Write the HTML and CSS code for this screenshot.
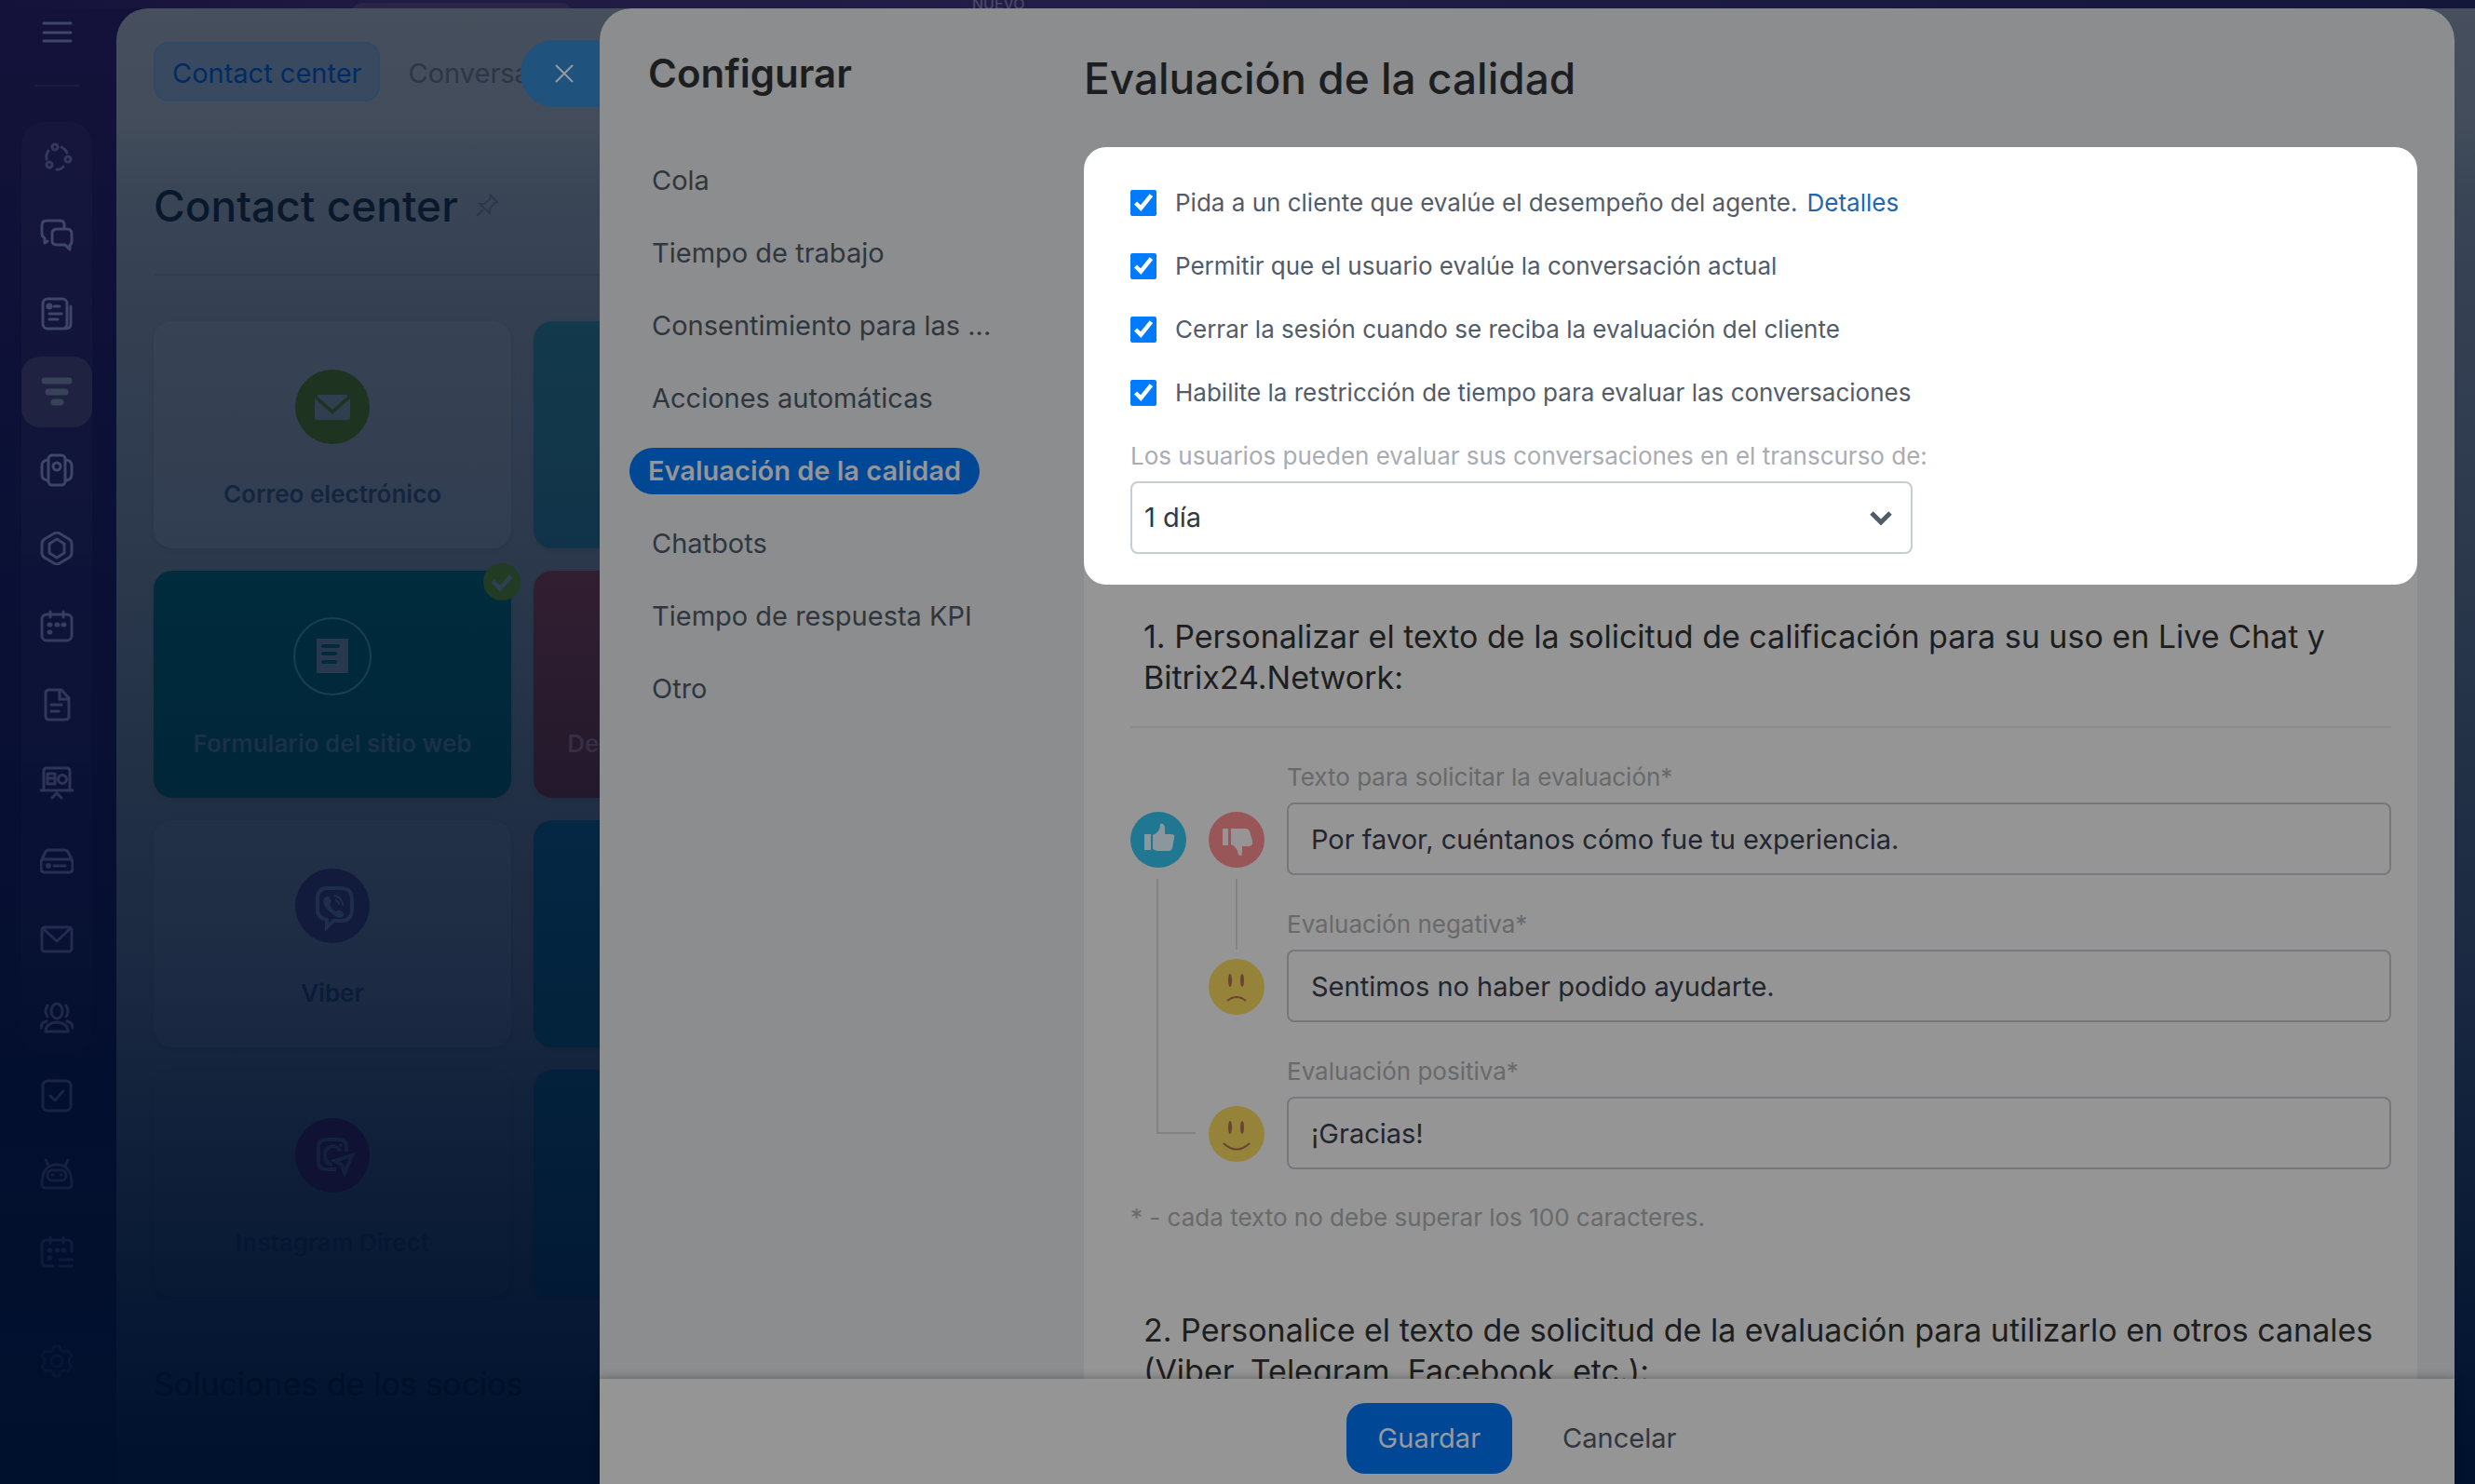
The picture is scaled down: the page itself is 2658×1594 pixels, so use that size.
FILE: index.html
```html
<!DOCTYPE html>
<html lang="es">
<head>
    <meta charset="UTF-8">
    <meta name="viewport" content="width=device-width, initial-scale=1.0">
    <title>Contact center - Evaluación de la calidad</title>
    <link rel="stylesheet" href="styles.css">
</head>
<body>
    <div class="topbar">
        <div class="topbar-tab"></div>
        <span class="topbar-label">NUEVO</span>
    </div>

    <nav class="rail" aria-label="Menú principal">
        <button class="rail-toggle" aria-label="Menú">
            <svg class="icon" viewBox="0 0 36 36"><path d="M4 8h29M4 18h29M4 27h29"/></svg>
        </button>
        <div class="rail-line"></div>
        <div class="rail-group">
            <a class="rail-item dim" href="#" aria-label="Colaboración">
                <svg class="icon" viewBox="0 0 36 36"><circle cx="16" cy="7" r="3"/><circle cx="30" cy="20" r="3"/><circle cx="10" cy="26" r="3"/><path d="M9 11q-3 4-2 9M23 7q4 2 6 6M18 31q5 0 7-3"/></svg>
            </a>
            <a class="rail-item" href="#" aria-label="Chat">
                <svg class="icon" viewBox="0 0 36 36"><path d="M26 9V6q0-4-5-4H7Q2 2 2 7v9q0 3 3 5v5l3-2"/><path d="M18 11h11q5 0 5 5v8q0 3-2 4v5l-5-5h-9q-5 0-5-5v-7q0-5 5-5z"/></svg>
            </a>
            <a class="rail-item" href="#" aria-label="Noticias">
                <svg class="icon" viewBox="0 0 36 36"><rect x="3" y="2" width="26" height="32" rx="5"/><path d="M33 10v19q0 5-6 5M15 10h6M10 18h13M10 24h9"/><circle cx="10" cy="10" r="2" fill="currentColor"/></svg>
            </a>
            <a class="rail-item active" href="#" aria-label="CRM">
                <svg class="icon" viewBox="0 0 36 36"><path stroke-width="7" d="M5 6h26M9 18h18M15 29h7"/></svg>
            </a>
            <a class="rail-item" href="#" aria-label="Inventario">
                <svg class="icon" viewBox="0 0 36 36"><rect x="9" y="2" width="18" height="32" rx="4"/><circle cx="18" cy="14" r="4"/><path d="M8 7q-6 1-6 6v10q0 5 6 6M28 7q6 1 6 6v10q0 5-6 6"/></svg>
            </a>
            <a class="rail-item" href="#" aria-label="Automatización">
                <svg class="icon" viewBox="0 0 36 36"><path d="M15 2q3-1.500 6 0l10 6q3 2 3 5v10q0 3-3 5l-10 6q-3 1.500-6 0L5 28q-3-2-3-5V13q0-3 3-5z"/><path d="M18 8l8 5v10l-8 5-8-5V13z"/></svg>
            </a>
            <a class="rail-item" href="#" aria-label="Calendario">
                <svg class="icon" viewBox="0 0 36 36"><rect x="2" y="5" width="32" height="28" rx="5"/><path d="M11 2v6M25 2v6"/><path stroke-width="5" d="M10 16h1M18 16h1M25 16h1M10 24h1"/></svg>
            </a>
            <a class="rail-item" href="#" aria-label="Documentos">
                <svg class="icon" viewBox="0 0 36 36"><path d="M10 2h13l8 9v19q0 4-4 4H10q-4 0-4-4V6q0-4 4-4z"/><path d="M21 3v9h9M12 18h11M12 25h8"/></svg>
            </a>
            <a class="rail-item" href="#" aria-label="Pizarras">
                <svg class="icon" viewBox="0 0 36 36"><path d="M4 26V5q0-3 3-3h22q3 0 3 3v21M1 26h34M13 34l5-5 5 5"/><rect x="8" y="8" width="8" height="11"/><path d="M8 13h8"/><circle cx="24" cy="14" r="4.500"/></svg>
            </a>
            <a class="rail-item" href="#" aria-label="Drive">
                <svg class="icon" viewBox="0 0 36 36"><path d="M9 6h18q2 0 3 2l4 8q1 2 1 4v6q0 4-4 4H5q-4 0-4-4v-6q0-2 1-4l4-8q1-2 3-2zM3 16h30M15 23h12"/><circle cx="9" cy="23" r="1.500"/></svg>
            </a>
            <a class="rail-item" href="#" aria-label="Correo">
                <svg class="icon" viewBox="0 0 36 36"><rect x="2" y="5" width="32" height="26" rx="3"/><path d="M4 7l14 13L32 7"/></svg>
            </a>
            <a class="rail-item" href="#" aria-label="Empleados">
                <svg class="icon" viewBox="0 0 36 36"><ellipse cx="18" cy="11" rx="6" ry="8"/><path d="M6 33q0-9 12-10 12 1 12 10zM8 5q-4 6 0 12M28 5q4 6 0 12M1 29q0-6 6-7M35 29q0-6-6-7"/></svg>
            </a>
        </div>
        <a class="rail-item" href="#" aria-label="Tareas">
            <svg class="icon" viewBox="0 0 36 36"><rect x="3" y="2" width="30" height="32" rx="5"/><path d="M11 18l5 5 9-10"/></svg>
        </a>
        <a class="rail-item" href="#" aria-label="Bots">
            <svg class="icon" viewBox="0 0 36 36"><path d="M2 29q0-21 16-21t16 21q0 4-4 4H6q-4 0-4-4zM9 9L6 3M27 9l3-6"/><rect x="8" y="14" width="20" height="11" rx="5"/><path d="M13 19h1M22 19h1"/></svg>
        </a>
        <a class="rail-item" href="#" aria-label="Reservas">
            <svg class="icon" viewBox="0 0 36 36"><path d="M34 17v-7q0-5-5-5H7q-5 0-5 5v18q0 5 5 5h7M11 2v6M25 2v6M21 26h14M21 33h14"/><path stroke-width="5" d="M10 16h1M18 16h1M25 16h1M10 24h1"/></svg>
        </a>
        <a class="rail-item rail-settings" href="#" aria-label="Ajustes">
            <svg class="icon" viewBox="0 0 36 36"><path d="M15 2h6l1 4 4 2 4-1 4 5-3 4v4l3 4-4 5-4-1-4 2-1 4h-6l-1-4-4-2-4 1-4-5 3-4v-4l-3-4 4-5 4 1 4-2z"/><circle cx="18" cy="18" r="6"/></svg>
        </a>
    </nav>

    <main class="workspace">
        <div class="tabs">
            <a class="tab active" href="#">Contact center</a>
            <a class="tab" href="#">Conversaciones</a>
        </div>
        <div class="page-title">
            <h1>Contact center</h1>
            <svg class="pin" viewBox="0 0 26 26"><path d="M17 2l7 7-3 1-5 6v5l-11-10h5l6-5zM9 17l-7 7"/></svg>
        </div>
        <div class="channels">
            <a class="channel email" href="#">
                <svg class="channel-icon" viewBox="0 0 80 80"><circle cx="40" cy="40" r="40" fill="#1e3320"/><path fill="#303e50" d="M24 27h32v2L40 43 24 29zM21 31l19 17 19-17v21q0 2-2 2H23q-2 0-2-2z"/></svg>
                <span>Correo electrónico</span>
            </a>
            <a class="channel teal" href="#"></a>
            <a class="channel form" href="#">
                <svg class="channel-icon" viewBox="0 0 80 80"><circle cx="40" cy="40" r="41" fill="none" stroke="#183f52" stroke-width="2"/><path fill="#27384f" d="M23 21h34v37H23z"/><path stroke="#002b3c" stroke-width="4" stroke-linecap="round" d="M30 29h16M30 37h13M30 46h13"/></svg>
                <span>Formulario del sitio web</span>
                <svg class="channel-check" viewBox="0 0 40 40"><circle cx="20" cy="20" r="20" fill="#213b24"/><path fill="none" stroke="#2c4050" stroke-width="5" d="M10 19l8 8 12-13"/></svg>
            </a>
            <a class="channel red" href="#"><span>Devolución de la llamada</span></a>
            <a class="channel viber" href="#">
                <svg class="channel-icon" viewBox="0 0 80 80"><circle cx="40" cy="40" r="40" fill="#131b3d"/><path fill="none" stroke="#1e2d4a" stroke-width="4" d="M34 21h15q12 0 12 12v11q0 12-12 12h-8l-7 7v-8q-10-2-10-11V33q0-12 10-12z"/><path fill="#1e2d4a" d="M33 30q3-2 5 3 2 3-1 5 2 6 7 8 3-3 6 0 4 3 1 5-3 4-9-1-9-5-12-14 0-4 3-6z"/><path fill="none" stroke="#1e2d4a" stroke-width="2" d="M42 29q9 2 9 11M43 34q4 1 4 5"/></svg>
                <span>Viber</span>
            </a>
            <a class="channel blue" href="#"></a>
            <a class="channel instagram" href="#">
                <svg class="channel-icon" viewBox="0 0 80 80"><circle cx="40" cy="40" r="40" fill="#0f1233"/><g fill="none" stroke="#13213f" stroke-width="4"><path d="M44 55H33q-8 0-8-8V31q0-8 8-8h14q8 0 8 8v5M40 50q-8-1-8-10t8-10q7 0 8 6"/><path d="M61 40L42 46l8 4 3 9z"/></g><circle cx="49" cy="29" r="2" fill="#13213f"/></svg>
                <span>Instagram Direct</span>
            </a>
            <a class="channel navy" href="#"></a>
        </div>
        <h2 class="partners">Soluciones de los socios</h2>
    </main>

    <section class="slider">
        <button class="slider-close" aria-label="Cerrar">
            <svg viewBox="0 0 20 20"><path d="M1 1l18 18M19 1L1 19"/></svg>
        </button>
        <div class="slider-body">
            <aside class="menu">
                <h2>Configurar</h2>
                <ul>
                    <li><a href="#">Cola</a></li>
                    <li><a href="#">Tiempo de trabajo</a></li>
                    <li><a href="#">Consentimiento para las ...</a></li>
                    <li><a href="#">Acciones automáticas</a></li>
                    <li><a class="active" href="#">Evaluación de la calidad</a></li>
                    <li><a href="#">Chatbots</a></li>
                    <li><a href="#">Tiempo de respuesta KPI</a></li>
                    <li><a href="#">Otro</a></li>
                </ul>
            </aside>

            <form class="settings" id="settings">
                <h1>Evaluación de la calidad</h1>
                <div class="sheet">
                    <div class="rating-options">
                        <div class="check-row">
                            <input type="checkbox" id="askClient" checked>
                            <label for="askClient">Pida a un cliente que evalúe el desempeño del agente.</label>
                            <a href="#">Detalles</a>
                        </div>
                        <div class="check-row">
                            <input type="checkbox" id="allowCurrent" checked>
                            <label for="allowCurrent">Permitir que el usuario evalúe la conversación actual</label>
                        </div>
                        <div class="check-row">
                            <input type="checkbox" id="closeSession" checked>
                            <label for="closeSession">Cerrar la sesión cuando se reciba la evaluación del cliente</label>
                        </div>
                        <div class="check-row">
                            <input type="checkbox" id="timeLimit" checked>
                            <label for="timeLimit">Habilite la restricción de tiempo para evaluar las conversaciones</label>
                        </div>
                        <label class="field-label" for="period">Los usuarios pueden evaluar sus conversaciones en el transcurso de:</label>
                        <div class="select-wrap">
                            <select id="period">
                                <option>1 día</option>
                            </select>
                            <svg viewBox="0 0 24 16"><path d="M2 3l10 10L22 3"/></svg>
                        </div>
                    </div>

                    <div class="texts">
                        <h3>1. Personalizar el texto de la solicitud de calificación para su uso en Live Chat y Bitrix24.Network:</h3>
                        <div class="replies">
                            <svg class="mark like" viewBox="0 0 60 60"><circle cx="30" cy="30" r="30" fill="#207791"/><path fill="#8b979d" d="M15 24h7v17h-7zM24 25q8-3 8-12 5-1 5 5v6h7q4 0 3 4l-2 11q-1 3-4 3H28l-4-2z"/></svg>
                            <svg class="mark dislike" viewBox="0 0 60 60"><circle cx="30" cy="30" r="30" fill="#995659"/><path fill="#989394" d="M15 18h6v18h-6zM24 18h15q4 0 5 3l3 10q1 6-4 6h-7v7q0 5-4 2-1-8-8-11z"/></svg>
                            <div class="field request">
                                <label class="field-label" for="requestText">Texto para solicitar la evaluación*</label>
                                <input type="text" id="requestText" value="Por favor, cuéntanos cómo fue tu experiencia.">
                            </div>
                            <div class="link-positive"></div>
                            <div class="face-cell sad">
                                <span class="link-negative"></span>
                                <svg viewBox="0 0 60 60"><circle cx="30" cy="30" r="30" fill="#958339"/><g fill="#6a4336"><ellipse cx="23" cy="23" rx="2" ry="7"/><ellipse cx="36" cy="23" rx="2" ry="7"/></g><path fill="none" stroke="#6a4336" stroke-width="2" d="M20 45q10-8 20 0"/></svg>
                            </div>
                            <div class="field negative">
                                <label class="field-label" for="negativeText">Evaluación negativa*</label>
                                <input type="text" id="negativeText" value="Sentimos no haber podido ayudarte.">
                            </div>
                            <div class="face-cell happy">
                                <svg viewBox="0 0 60 60"><circle cx="30" cy="30" r="30" fill="#958339"/><g fill="#6a4336"><ellipse cx="23" cy="23" rx="2" ry="7"/><ellipse cx="36" cy="23" rx="2" ry="7"/></g><path fill="none" stroke="#6a4336" stroke-width="2" d="M16 40q14 13 28 0"/></svg>
                            </div>
                            <div class="field positive">
                                <label class="field-label" for="positiveText">Evaluación positiva*</label>
                                <input type="text" id="positiveText" value="¡Gracias!">
                            </div>
                        </div>
                        <p class="note">* - cada texto no debe superar los 100 caracteres.</p>
                        <h3>2. Personalice el texto de solicitud de la evaluación para utilizarlo en otros canales (Viber, Telegram, Facebook, etc.):</h3>
                    </div>
                </div>
            </form>
        </div>
        <div class="slider-footer">
            <button class="btn primary" type="submit" form="settings">Guardar</button>
            <button class="btn" type="button">Cancelar</button>
        </div>
    </section>
</body>
</html>
```

FILE: styles.css
```css
* {
    margin: 0;
    padding: 0;
    box-sizing: border-box;
}

body {
    position: relative;
    display: flex;
    height: 100vh;
    overflow: hidden;
    padding-top: 9px;
    font-family: Inter, "Liberation Sans", sans-serif;
    font-size: 26px;
    line-height: 32px;
    background: linear-gradient(#14123a 0, #0a1035 40%, #030f2e 75%, #00112d 100%);
}

a {
    color: inherit;
    text-decoration: none;
}

button,
input,
select {
    font: inherit;
}

button {
    border: none;
    background: none;
    cursor: pointer;
}

/* Top bar, mostly covered by the panels */
.topbar {
    position: absolute;
    top: 0;
    left: 0;
    right: 0;
    height: 9px;
    overflow: hidden;
    background: linear-gradient(90deg, #14113a 0, #1e1a42 15%, #221e47 45%, #14163a 100%);
}

.topbar-tab {
    position: absolute;
    top: 3px;
    left: 377px;
    width: 238px;
    height: 40px;
    border-radius: 12px;
    background: #2a2447;
}

.topbar-label {
    position: absolute;
    bottom: -3px;
    left: 1044px;
    font-size: 16px;
    line-height: 16px;
    font-weight: 500;
    color: #4b4768;
}

/* Left rail */
.rail {
    flex: none;
    width: 125px;
    padding: 4px 26px 0 23px;
    display: flex;
    flex-direction: column;
    color: #40456a;
    -webkit-mask-image: linear-gradient(#000 0, #000 30%, rgba(0,0,0,0.5) 65%, rgba(0,0,0,0.12) 92%);
    mask-image: linear-gradient(#000 0, #000 30%, rgba(0,0,0,0.5) 65%, rgba(0,0,0,0.12) 92%);
}

.icon {
    width: 36px;
    height: 36px;
    fill: none;
    stroke: currentColor;
    stroke-width: 3;
    stroke-linecap: round;
    stroke-linejoin: round;
}

.rail-toggle {
    height: 50px;
    color: inherit;
}

.rail-line {
    height: 2px;
    margin: 28px 14px 38px;
    background: #1e1a40;
}

.rail-group {
    display: flex;
    flex-direction: column;
    gap: 8px;
    margin-bottom: 8px;
    border-radius: 24px;
    background: rgba(255,255,255,0.02);
}

.rail-item {
    flex: none;
    height: 76px;
    margin-bottom: 8px;
    display: flex;
    align-items: center;
    justify-content: center;
    border-radius: 20px;
}

.rail-group .rail-item {
    margin-bottom: 0;
}

.rail-item.dim {
    color: #34385a;
}

.rail-item.active {
    background: #1f2241;
    color: #384259;
}

.rail-settings {
    margin-top: 33px;
}

/* Contact center page */
.workspace {
    flex: 1;
    min-width: 0;
    overflow: hidden;
    padding: 36px 40px 0;
    border-top-left-radius: 34px;
    background: linear-gradient(#474f5d 0, #424c5b 8%, #3a4656 12%, #343f52 21%, #2d3a4d 35%, #223046 52%, #1a2941 66%, #101f39 78%, #061833 89%, #00122e 98%);
}

.tabs {
    display: flex;
}

.tab {
    height: 64px;
    padding: 0 18px;
    border: 2px solid transparent;
    border-radius: 16px;
    font-size: 29px;
    line-height: 64px;
    color: #2b3647;
}

.tab.active {
    margin-right: 10px;
    border-color: #2f4a66;
    background: #394a60;
    color: #002b63;
}

.page-title {
    display: flex;
    align-items: center;
    gap: 18px;
    height: 187px;
    padding-top: 38px;
    border-bottom: 2px solid #303c4f;
}

.page-title h1 {
    font-size: 46px;
    line-height: 60px;
    font-weight: 500;
    color: #0a182b;
}

.pin {
    width: 26px;
    height: 26px;
    fill: none;
    stroke: #2c384a;
    stroke-width: 2;
}

.channels {
    display: grid;
    grid-template-columns: repeat(auto-fill, 384px);
    grid-auto-rows: 244px;
    gap: 24px;
    margin-top: 49px;
    max-width: 816px;
}

.channel {
    position: relative;
    display: flex;
    flex-direction: column;
    align-items: center;
    justify-content: flex-end;
    gap: 38px;
    padding-bottom: 42px;
    border-radius: 20px;
    background: rgba(255,255,255,0.02);
    font-weight: 600;
    color: #14253f;
    box-shadow: 0 2px 4px rgba(0,0,0,0.08);
}

.channel-icon {
    width: 80px;
    height: 80px;
    overflow: visible;
}

.channel-check {
    position: absolute;
    top: -8px;
    right: -10px;
    width: 40px;
    height: 40px;
}

.channel.teal {
    background: linear-gradient(#13394c, #113349);
}

.channel.form {
    background: linear-gradient(#002c3d, #002638);
    color: #1b3049;
}

.channel.red {
    background: linear-gradient(#321e31, #23192c);
    color: #352f46;
}

.channel.blue {
    background: linear-gradient(#042744, #03223b);
}

.channel.navy {
    background: linear-gradient(#03213b, #021934);
}

.channel.viber {
    background: rgba(255,255,255,0.01);
    color: #0a1c39;
}

.channel.instagram {
    background: rgba(255,255,255,0.005);
    color: #061734;
}

.partners {
    margin-top: 70px;
    font-size: 34px;
    line-height: 48px;
    font-weight: 400;
    color: #000f29;
}

/* Slide-over panel */
.slider {
    position: absolute;
    top: 9px;
    right: 22px;
    bottom: 0;
    left: 644px;
    display: flex;
    flex-direction: column;
    border-radius: 34px 34px 0 0;
    background: #8b8d8e;
}

.slider-close {
    position: absolute;
    top: 34px;
    right: 100%;
    width: 85px;
    height: 72px;
    padding: 2px 0 0 8px;
    border-radius: 36px 0 0 36px;
    background: #1f527d;
}

.slider-close svg {
    width: 20px;
    height: 20px;
    fill: none;
    stroke: #929ba3;
    stroke-width: 2;
}

.slider-body {
    flex: 1;
    min-height: 0;
    display: flex;
    overflow: hidden;
}

.menu {
    flex: none;
    width: 520px;
    padding: 42px 32px 0;
}

.menu h2 {
    padding-left: 20px;
    font-size: 42px;
    line-height: 56px;
    font-weight: 600;
    color: #1d1e20;
}

.menu ul {
    display: flex;
    flex-direction: column;
    align-items: flex-start;
    gap: 28px;
    margin-top: 62px;
    list-style: none;
}

.menu a {
    display: block;
    padding: 0 24px;
    border-radius: 25px;
    font-size: 29px;
    line-height: 50px;
    white-space: nowrap;
    color: #30363e;
}

.menu a.active {
    padding: 0 20px;
    background: #004796;
    font-weight: 600;
    color: #959595;
}

.settings {
    flex: 1;
    min-width: 0;
    padding: 45px 40px 0 0;
}

.settings h1 {
    margin-bottom: 44px;
    font-size: 46px;
    line-height: 60px;
    font-weight: 500;
    color: #1d1e20;
}

.sheet {
    min-height: 100%;
    border-radius: 24px 24px 0 0;
    background: #959595;
}

.rating-options {
    padding: 44px 50px 33px;
    border-radius: 24px;
    background: #fff;
}

.check-row {
    display: flex;
    align-items: center;
    margin-bottom: 36px;
    color: #525c69;
}

.check-row input {
    width: 28px;
    height: 28px;
    margin-right: 20px;
    accent-color: #007bff;
}

.check-row a {
    margin-left: 10px;
    color: #2067b0;
}

.field-label {
    display: block;
    margin-bottom: 11px;
    color: #a8adb4;
}

.select-wrap {
    position: relative;
    max-width: 840px;
}

.select-wrap select {
    display: block;
    width: 100%;
    height: 78px;
    padding: 0 13px;
    border: 2px solid #c6cdd3;
    border-radius: 8px;
    background: #fff;
    font-size: 29px;
    color: #333842;
    appearance: none;
}

.select-wrap svg {
    position: absolute;
    top: 31px;
    right: 22px;
    width: 24px;
    height: 16px;
    fill: none;
    stroke: #525c69;
    stroke-width: 5;
    pointer-events: none;
}

.texts {
    padding: 34px 28px 0 50px;
}

.texts h3 {
    padding: 0 0 30px 14px;
    font-size: 34px;
    line-height: 44px;
    font-weight: 400;
    color: #1d1e20;
}

/* Icons on the left, reply texts on the right, joined by connector lines */
.replies {
    display: grid;
    grid-template-columns: 60px 60px 1fr;
    column-gap: 24px;
    border-top: 2px solid #898b8d;
}

.mark {
    align-self: end;
    width: 60px;
    height: 60px;
    margin-bottom: 8px;
}

.link-positive {
    grid-column: 1;
    grid-row: 2 / 4;
    width: 42px;
    margin: 4px 0 38px 28px;
    border-left: 2px solid #808284;
    border-bottom: 2px solid #808284;
}

.face-cell {
    grid-column: 2;
    display: flex;
    flex-direction: column;
    align-items: center;
    justify-content: flex-end;
    gap: 10px;
    padding: 4px 0 8px;
}

.face-cell.sad {
    grid-row: 2;
}

.face-cell.happy {
    grid-row: 3;
}

.face-cell svg {
    width: 60px;
    height: 60px;
}

.link-negative {
    flex: 1;
    width: 2px;
    background: #808284;
}

.field {
    grid-column: 3;
    padding-top: 37px;
}

.texts .field-label,
.note {
    color: #68696b;
}

.field input {
    display: block;
    width: 100%;
    height: 78px;
    padding: 0 24px;
    border: 2px solid #76787b;
    border-radius: 8px;
    background: transparent;
    font-size: 29px;
    color: #22262e;
}

.note {
    margin: 36px 0 83px;
}

.slider-footer {
    position: relative;
    flex: none;
    display: flex;
    justify-content: center;
    gap: 20px;
    padding: 26px 0 11px;
    background: #959595;
    box-shadow: 0 -2px 8px rgba(0,0,0,0.25);
}

.btn {
    height: 76px;
    padding: 0 34px;
    border-radius: 20px;
    font-size: 29px;
    color: #30363e;
}

.btn.primary {
    background: #004796;
    color: #959ba3;
}

@media (max-width: 1200px) {
    .slider {
        left: 125px;
        right: 0;
    }

    .menu {
        width: 420px;
    }
}
```
